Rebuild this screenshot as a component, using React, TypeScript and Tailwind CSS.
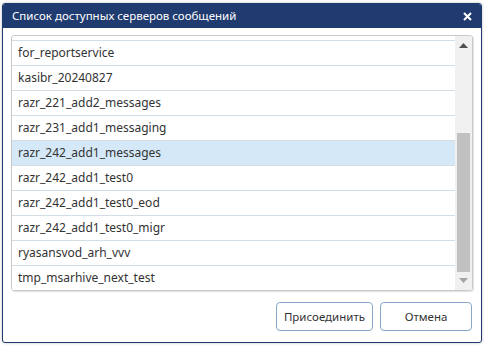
import React from 'react';

const servers = [
  'for_reportservice',
  'kasibr_20240827',
  'razr_221_add2_messages',
  'razr_231_add1_messaging',
  'razr_242_add1_messages',
  'razr_242_add1_test0',
  'razr_242_add1_test0_eod',
  'razr_242_add1_test0_migr',
  'ryasansvod_arh_vvv',
  'tmp_msarhive_next_test',
];

const selected = 'razr_242_add1_messages';

function Scrollbar() {
  return (
    <div className="flex w-[17px] shrink-0 flex-col bg-[#f0f0f0]">
      <div className="flex h-[17px] items-center justify-center pt-[2px]">
        <svg width="9" height="5" viewBox="0 0 9 5">
          <path d="M0 5 L4.5 0 L9 5 Z" fill="#505050" />
        </svg>
      </div>
      <div className="flex-1 px-[2px] pt-[80px] pb-[1px]">
        <div className="h-full bg-[#c1c1c1]" />
      </div>
      <div className="flex h-[17px] items-center justify-center pb-[2px]">
        <svg width="9" height="5" viewBox="0 0 9 5">
          <path d="M0 0 L9 0 L4.5 5 Z" fill="#a3a3a3" />
        </svg>
      </div>
    </div>
  );
}

export default function App() {
  return (
    <div className="h-[347px] w-[484px] bg-white px-[2px] pt-[3px] font-['Noto_Sans','Open_Sans',sans-serif]">
      <div className="flex h-[340px] w-[480px] flex-col overflow-hidden rounded-[3px] border border-[#1f3b6f] bg-white shadow-[0_0_3px_rgba(0,0,0,0.25)]">
        <div className="flex h-[24px] shrink-0 items-center justify-between bg-[#1f3b6f] pl-[9px] pr-[9px] text-[11.5px] text-white">
          <span>Список доступных серверов сообщений</span>
          <svg width="9" height="9" viewBox="0 0 9 9">
            <path d="M1 1 L8 8 M8 1 L1 8" stroke="#ffffff" strokeWidth="2" />
          </svg>
        </div>

        <div className="flex flex-1 flex-col px-[8px] pt-[7px]">
          <div className="flex h-[256px] w-[462px] overflow-hidden rounded-[3px] border border-[#c9c9c9] shadow-[1px_1px_1px_rgba(0,0,0,0.12)]">
            <div className="flex-1 overflow-hidden">
              <div className="h-[5px] border-b border-[#d3dde6]" />
              {servers.map((name) => (
                <div
                  key={name}
                  className={`flex h-[25px] items-center border-b border-[#d3dde6] pl-[6px] text-[12px] text-[#333333] ${
                    name === selected ? 'bg-[#d4e8f8]' : 'bg-white'
                  }`}
                >
                  {name}
                </div>
              ))}
            </div>
            <Scrollbar />
          </div>

          <div className="flex justify-end gap-[7px] pr-[1px] pt-[11px]">
            <button className="h-[29px] w-[97px] rounded-[4px] border border-[#8aa6c8] bg-white text-[11.5px] text-[#333333]">
              Присоединить
            </button>
            <button className="h-[29px] w-[92px] rounded-[4px] border border-[#8aa6c8] bg-white text-[11.5px] text-[#333333]">
              Отмена
            </button>
          </div>
        </div>
      </div>
    </div>
  );
}
